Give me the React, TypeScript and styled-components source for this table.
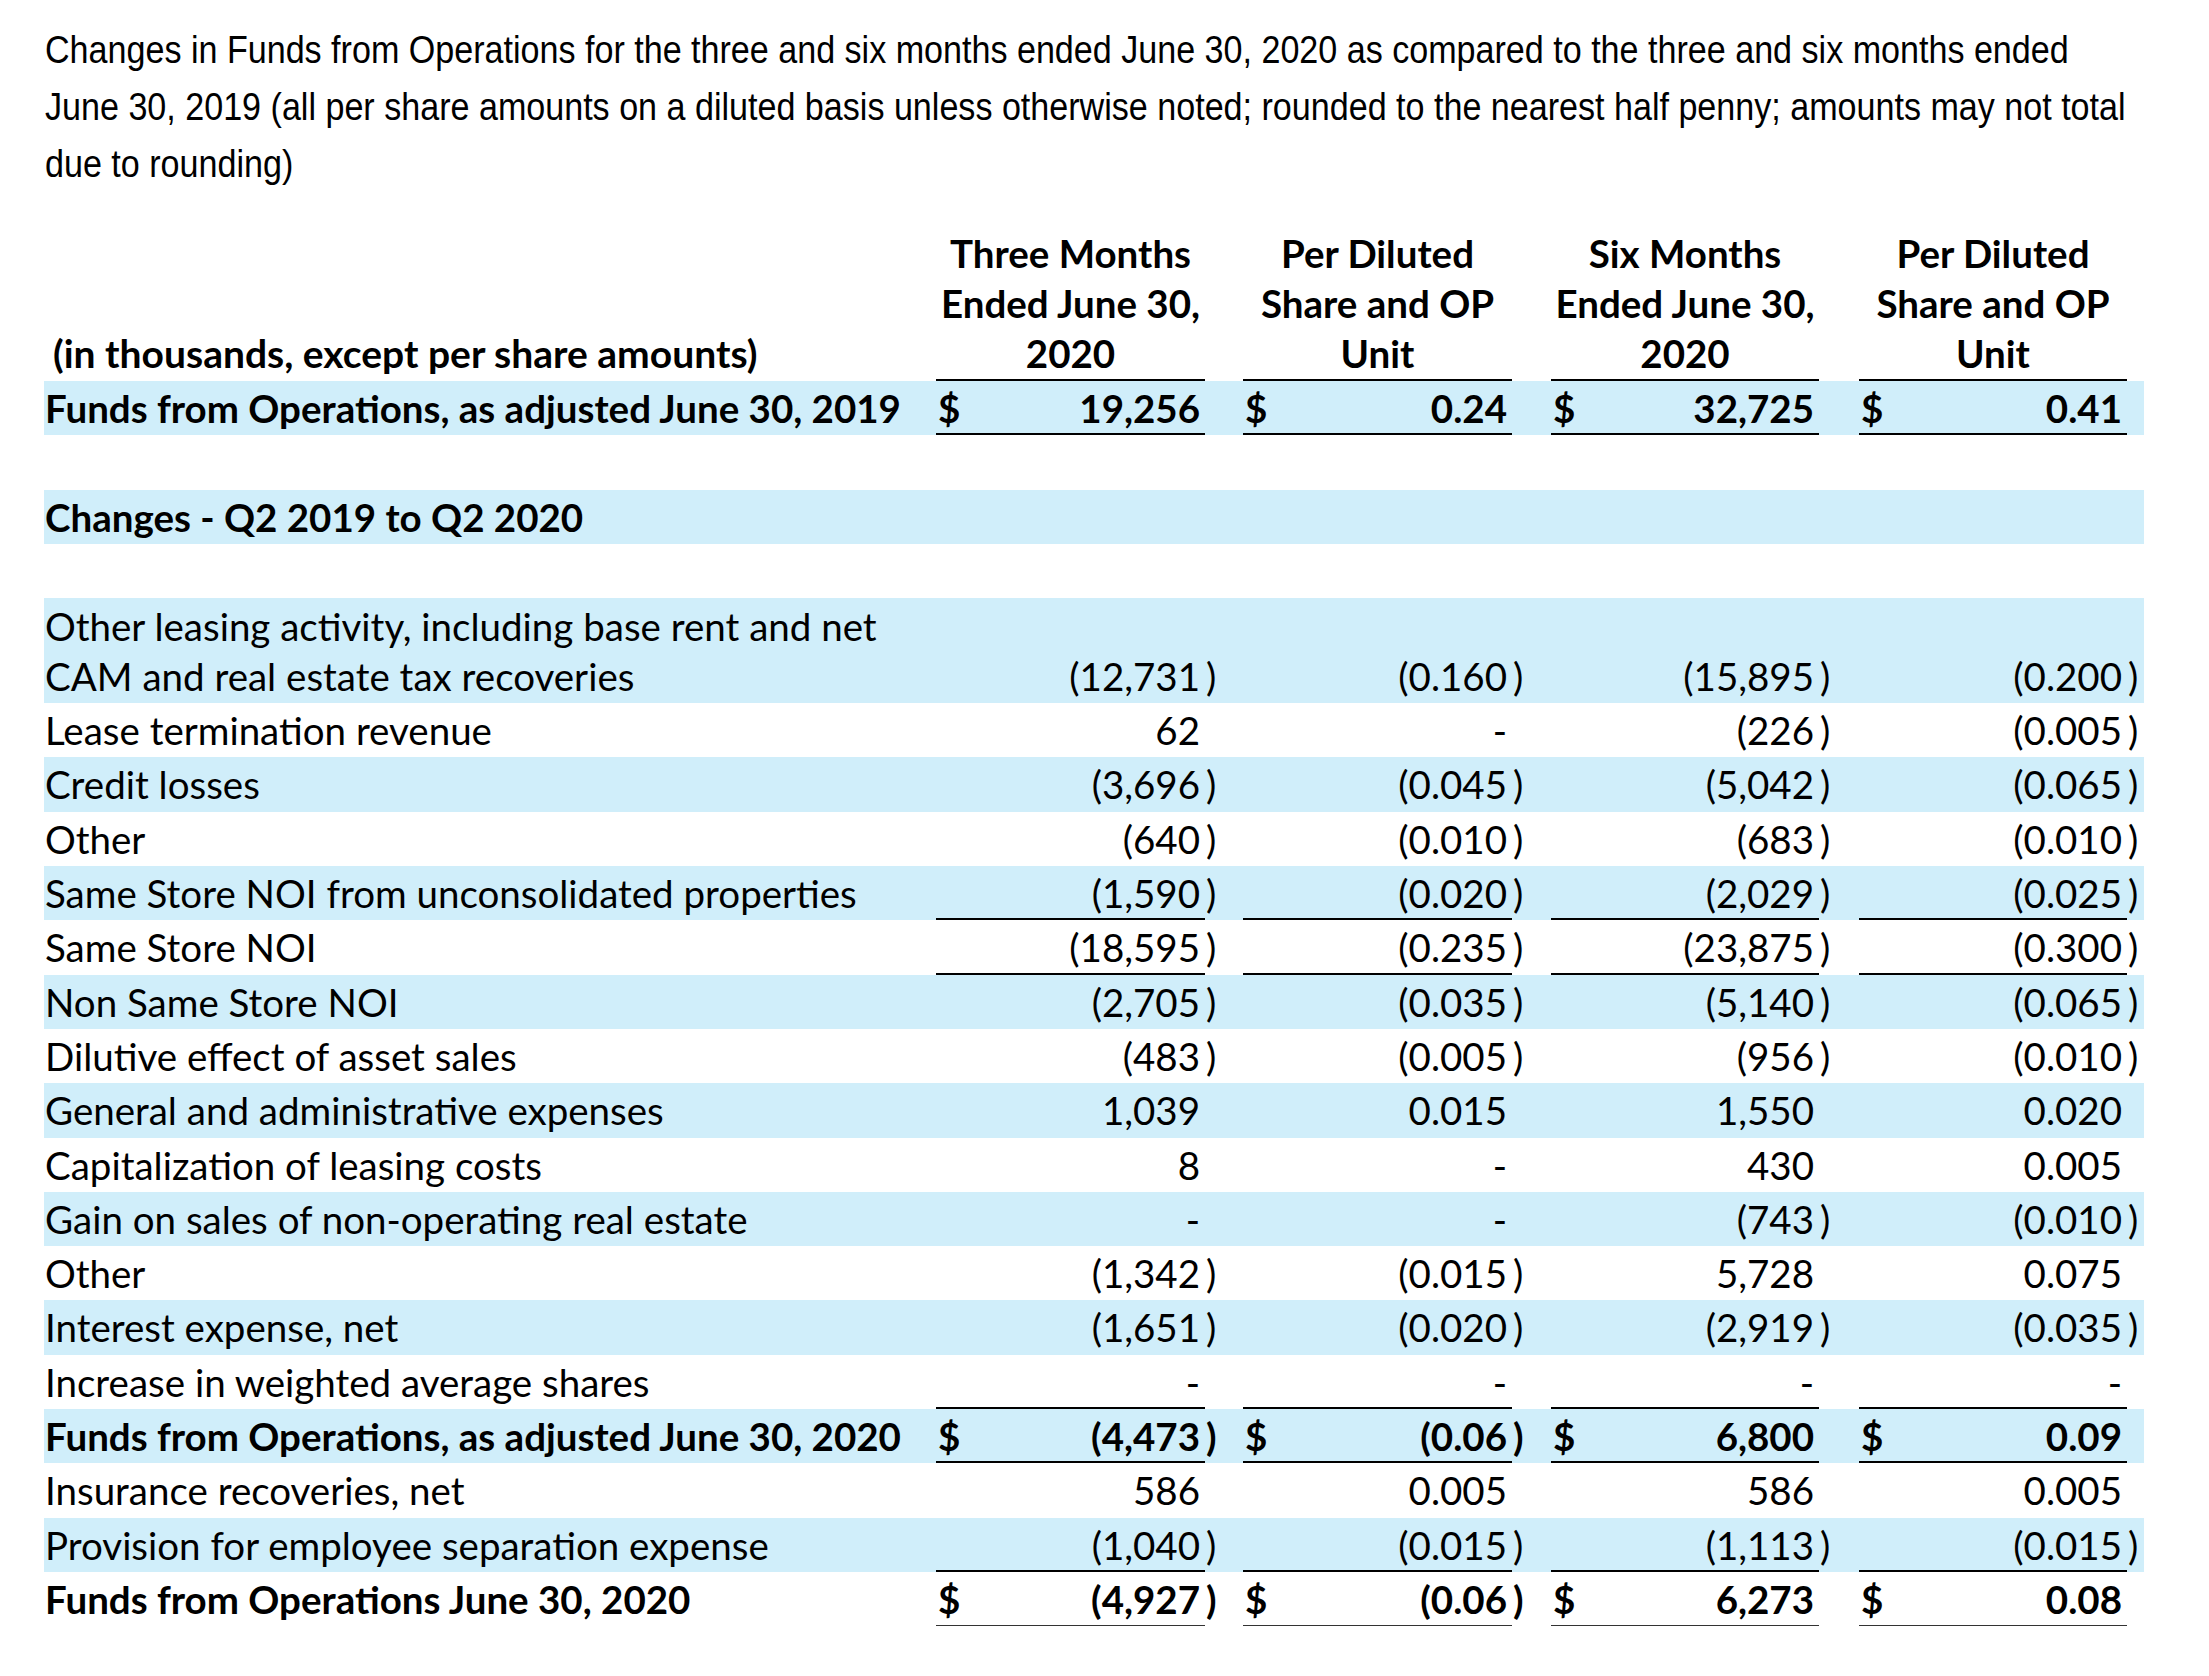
import React from "react";
import styled, { createGlobalStyle } from "styled-components";

const GRID = "892px 269px 38px 269px 39px 268px 40px 268px 17px";
const ROW_H = 54.3;
const SHADE = "#D0EEFA";

const GlobalStyle = createGlobalStyle`
  html, body { margin: 0; padding: 0; background: #ffffff; }
  body { color: #000; }
`;

const Page = styled.div`
  padding: 22px 0 0 44px;
  width: 2100px;
`;

const Intro = styled.p`
  margin: 0 0 35px 1px;
  font-family: "Liberation Sans", Arial, sans-serif;
  font-size: 38px;
  line-height: 57px;
  white-space: nowrap;
  transform: scaleX(0.897);
  transform-origin: left top;
`;

const Table = styled.div`
  font-family: Lato, "Noto Sans", sans-serif;
  font-size: 38.5px;
  display: flex;
  flex-direction: column;
`;

const Row = styled.div<{ $shade?: boolean; $h: number }>`
  display: grid;
  grid-template-columns: ${GRID};
  height: ${(p) => p.$h}px;
  line-height: ${ROW_H}px;
  background: ${(p) => (p.$shade ? SHADE : "transparent")};
`;

const HeaderRow = styled.div`
  display: grid;
  grid-template-columns: ${GRID};
  height: 153px;
  font-weight: 700;
  line-height: 50px;
`;

const HeadLabel = styled.div`
  align-self: end;
  padding: 0 0 3px 9px;
  white-space: nowrap;
  font-size: 39px;
`;

const HeadCell = styled.div`
  align-self: end;
  text-align: center;
  padding-bottom: 3px;
  box-shadow: inset 0 -2px 0 #000;
`;

const Label = styled.div<{ $bold?: boolean; $double?: boolean }>`
  font-weight: ${(p) => (p.$bold ? 700 : 400)};
  white-space: nowrap;
  padding-left: 1px;
  ${(p) => (p.$double ? "line-height: 50px; padding-top: 3px;" : "")}
`;

type Rule = "none" | "thick" | "thin";

const Amount = styled.div<{ $bold?: boolean; $rule: Rule }>`
  align-self: end;
  height: ${ROW_H}px;
  display: flex;
  justify-content: space-between;
  padding: 0 5px 0 2px;
  font-weight: ${(p) => (p.$bold ? 700 : 400)};
  box-shadow: ${(p) =>
    p.$rule === "thick"
      ? "inset 0 -2px 0 #000"
      : p.$rule === "thin"
      ? "inset 0 -1px 0 #333"
      : "none"};
`;

const Paren = styled.div<{ $bold?: boolean }>`
  align-self: end;
  height: ${ROW_H}px;
  padding-left: 1px;
  font-weight: ${(p) => (p.$bold ? 700 : 400)};
`;

type RowData = {
  label: string[];
  values?: string[];
  bold?: boolean;
  dollar?: boolean;
  shade?: boolean;
  rule?: Rule;
};

const rows: RowData[] = [
  { label: ["Funds from Operations, as adjusted June 30, 2019"], values: ["19,256", "0.24", "32,725", "0.41"], bold: true, dollar: true, shade: true, rule: "thick" },
  { label: [""] },
  { label: ["Changes - Q2 2019 to Q2 2020"], bold: true, shade: true },
  { label: [""] },
  { label: ["Other leasing activity, including base rent and net", "CAM and real estate tax recoveries"], values: ["(12,731)", "(0.160)", "(15,895)", "(0.200)"], shade: true },
  { label: ["Lease termination revenue"], values: ["62", "-", "(226)", "(0.005)"] },
  { label: ["Credit losses"], values: ["(3,696)", "(0.045)", "(5,042)", "(0.065)"], shade: true },
  { label: ["Other"], values: ["(640)", "(0.010)", "(683)", "(0.010)"] },
  { label: ["Same Store NOI from unconsolidated properties"], values: ["(1,590)", "(0.020)", "(2,029)", "(0.025)"], shade: true, rule: "thick" },
  { label: ["Same Store NOI"], values: ["(18,595)", "(0.235)", "(23,875)", "(0.300)"], rule: "thick" },
  { label: ["Non Same Store NOI"], values: ["(2,705)", "(0.035)", "(5,140)", "(0.065)"], shade: true },
  { label: ["Dilutive effect of asset sales"], values: ["(483)", "(0.005)", "(956)", "(0.010)"] },
  { label: ["General and administrative expenses"], values: ["1,039", "0.015", "1,550", "0.020"], shade: true },
  { label: ["Capitalization of leasing costs"], values: ["8", "-", "430", "0.005"] },
  { label: ["Gain on sales of non-operating real estate"], values: ["-", "-", "(743)", "(0.010)"], shade: true },
  { label: ["Other"], values: ["(1,342)", "(0.015)", "5,728", "0.075"] },
  { label: ["Interest expense, net"], values: ["(1,651)", "(0.020)", "(2,919)", "(0.035)"], shade: true },
  { label: ["Increase in weighted average shares"], values: ["-", "-", "-", "-"], rule: "thick" },
  { label: ["Funds from Operations, as adjusted June 30, 2020"], values: ["(4,473)", "(0.06)", "6,800", "0.09"], bold: true, dollar: true, shade: true, rule: "thick" },
  { label: ["Insurance recoveries, net"], values: ["586", "0.005", "586", "0.005"] },
  { label: ["Provision for employee separation expense"], values: ["(1,040)", "(0.015)", "(1,113)", "(0.015)"], shade: true, rule: "thick" },
  { label: ["Funds from Operations June 30, 2020"], values: ["(4,927)", "(0.06)", "6,273", "0.08"], bold: true, dollar: true, rule: "thin" },
];

const headers = [
  ["Three Months", "Ended June 30,", "2020"],
  ["Per Diluted", "Share and OP", "Unit"],
  ["Six Months", "Ended June 30,", "2020"],
  ["Per Diluted", "Share and OP", "Unit"],
];

function TableRow({ row }: { row: RowData }) {
  const double = row.label.length > 1;
  const h = double ? 105 : ROW_H;
  const rule: Rule = row.rule ?? "none";
  return (
    <Row $shade={row.shade} $h={h}>
      <Label $bold={row.bold} $double={double}>
        {row.label.map((l, i) => (
          <React.Fragment key={i}>
            {i > 0 && <br />}
            {l}
          </React.Fragment>
        ))}
      </Label>
      {[0, 1, 2, 3].map((i) => {
        const v = row.values ? row.values[i] : "";
        const neg = v.endsWith(")");
        const body = neg ? v.slice(0, -1) : v;
        return (
          <React.Fragment key={i}>
            <Amount $bold={row.bold} $rule={rule}>
              <span>{row.dollar ? "$" : ""}</span>
              <span>{body}</span>
            </Amount>
            <Paren $bold={row.bold}>{neg ? ")" : ""}</Paren>
          </React.Fragment>
        );
      })}
    </Row>
  );
}

export default function App() {
  return (
    <>
      <GlobalStyle />
      <Page>
        <Intro>
          Changes in Funds from Operations for the three and six months ended June 30, 2020 as compared to the three and six months ended
          <br />
          June 30, 2019 (all per share amounts on a diluted basis unless otherwise noted; rounded to the nearest half penny; amounts may not total
          <br />
          due to rounding)
        </Intro>
        <Table>
          <HeaderRow>
            <HeadLabel>(in thousands, except per share amounts)</HeadLabel>
            {headers.map((h, i) => (
              <React.Fragment key={i}>
                <HeadCell>
                  {h[0]}
                  <br />
                  {h[1]}
                  <br />
                  {h[2]}
                </HeadCell>
                <div />
              </React.Fragment>
            ))}
          </HeaderRow>
          {rows.map((r, i) => (
            <TableRow key={i} row={r} />
          ))}
        </Table>
      </Page>
    </>
  );
}
